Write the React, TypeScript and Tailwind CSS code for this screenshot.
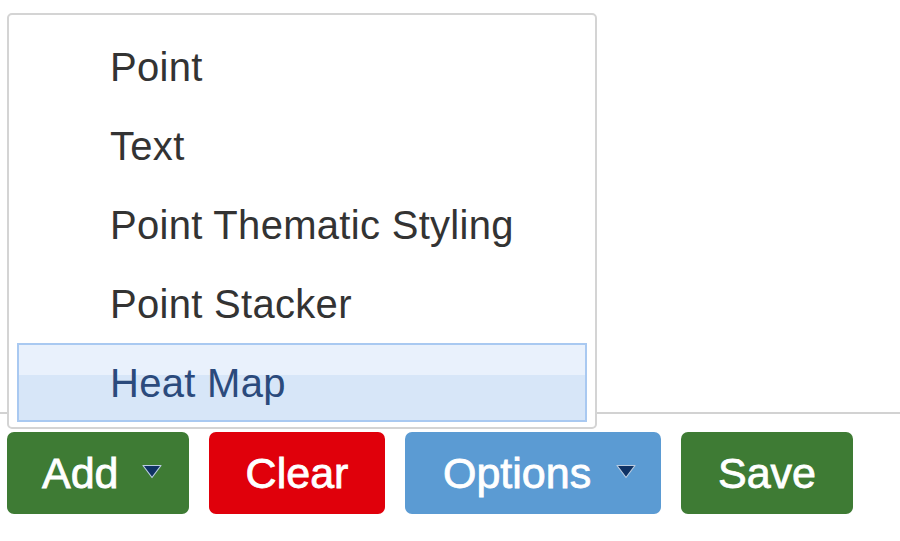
import React from 'react';

const menuItems = ['Point', 'Text', 'Point Thematic Styling', 'Point Stacker', 'Heat Map'];

function Caret() {
  return (
    <svg width="22" height="15" viewBox="0 0 22 15" className="shrink-0">
      <polygon points="2,1.5 20,1.5 11,13.5" fill="#0f3264" stroke="#b9cbe0" strokeWidth="1.2" strokeLinejoin="round" />
    </svg>
  );
}

const btn = 'h-[82px] rounded-[7px] text-white text-[43px] flex items-center [-webkit-text-stroke:0.8px_white]';

export default function App() {
  return (
    <div className="relative w-[900px] h-[541px] bg-white overflow-hidden" style={{ fontFamily: '"Liberation Sans", Arial, sans-serif' }}>
      {/* toolbar area with rule */}
      <div className="h-[412px]" />
      <div className="border-t-2 border-[#d2d2d2]" />

      {/* buttons */}
      <div className="flex gap-5 pl-[7px] mt-[18px]">
        <button className={`${btn} w-[182px] bg-[#3e7b34] pl-[35px]`}>
          <span className="leading-none">Add</span>
          <span className="ml-[22px] mt-[-4px]"><Caret /></span>
        </button>
        <button className={`${btn} w-[176px] bg-[#e0000b] justify-center`}>
          <span className="leading-none">Clear</span>
        </button>
        <button className={`${btn} w-[256px] bg-[#5b9bd3] justify-between pl-[38px] pr-[24px]`}>
          <span className="leading-none">Options</span>
          <span className="mt-[-4px]"><Caret /></span>
        </button>
        <button className={`${btn} w-[172px] bg-[#3e7b34] justify-center`}>
          <span className="leading-none">Save</span>
        </button>
      </div>

      {/* dropdown menu over the rule */}
      <div className="absolute left-[7px] top-[13px] w-[590px] h-[416px] bg-white border-2 border-[#d4d4d4] rounded-[5px] px-2 pt-3 pb-[5px]">
        {menuItems.map((item, i) => {
          const active = i === menuItems.length - 1;
          return (
            <div
              key={item}
              className={`h-[79px] flex items-center pl-[91px] text-[40px] leading-none tracking-[0.3px] border-2 ${
                active
                  ? 'border-[#a9c9f1] bg-[linear-gradient(to_bottom,#e9f1fc_0%,#e9f1fc_40%,#d7e6f8_40%,#d7e6f8_100%)] text-[#2b4a7c]'
                  : 'border-transparent text-[#333333]'
              }`}
            >
              {item}
            </div>
          );
        })}
      </div>
    </div>
  );
}
